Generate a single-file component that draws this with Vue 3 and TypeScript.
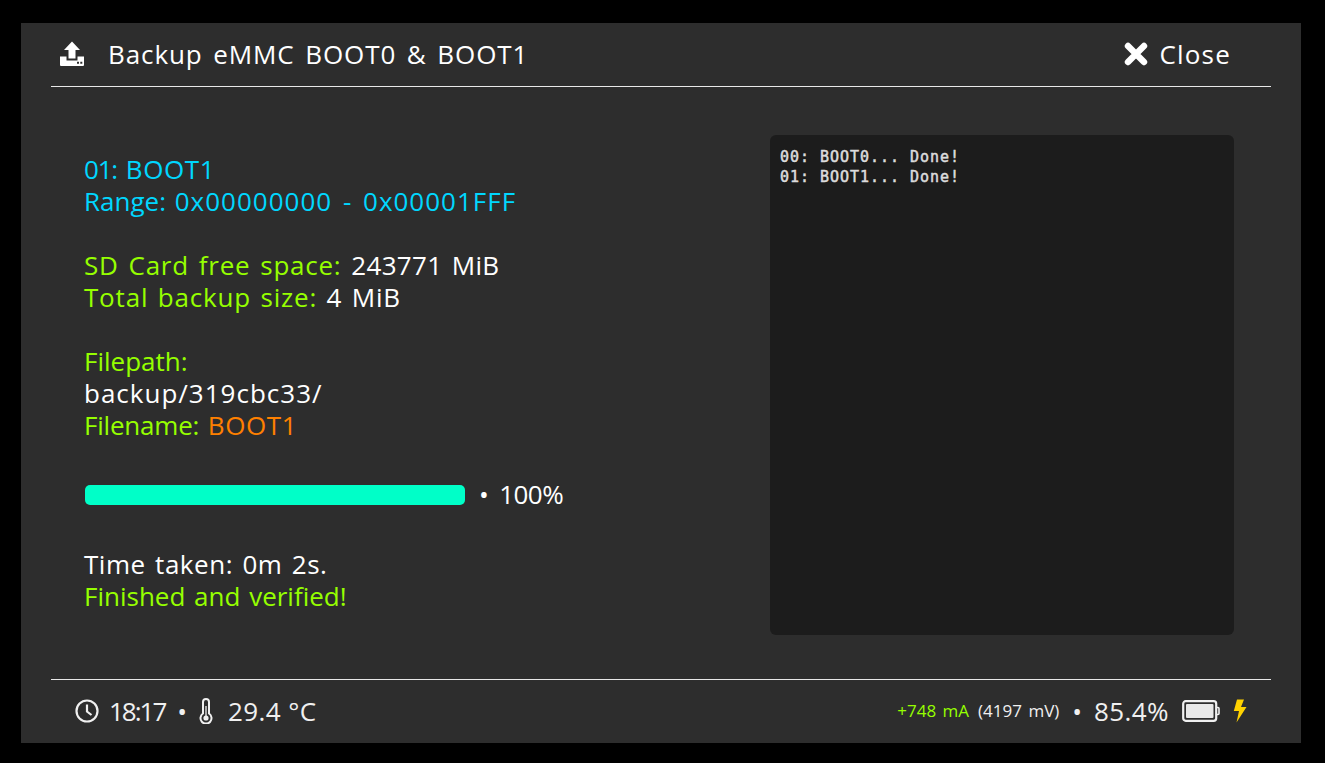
<script setup lang="ts">
const consoleLines: string[] = ['00: BOOT0... Done!', '01: BOOT1... Done!']
</script>

<template>
  <div class="frame">
    <main class="panel">
      <header class="top">
        <div class="title">
          <svg class="up" width="26" height="26" viewBox="0 0 26 26">
            <path fill="#fff" d="M13 0.5 L21 9 H16.5 V17.5 H9.5 V9 H5 Z" />
            <path fill="#fff" fill-rule="evenodd" d="M1 15.5 H7.5 V19.5 H18.5 V15.5 H25 V24 Q25 25 24 25 H2 Q1 25 1 24 Z M18 20.8 H20 V22.8 H18 Z M21.3 20.8 H23.3 V22.8 H21.3 Z" />
          </svg>
          <span>Backup eMMC BOOT0 &amp; BOOT1</span>
        </div>
        <div class="close">
          <svg width="24" height="24" viewBox="0 0 24 24">
            <path d="M4 4 L20 20 M20 4 L4 20" stroke="#fff" stroke-width="6.4" stroke-linecap="round" />
          </svg>
          <span>Close</span>
        </div>
      </header>

      <section class="body">
        <div class="info">
          <p class="cyan"><span class="tight">01:</span> <span class="caps">BOOT1</span></p>
          <p class="cyan">Range: <span class="hex">0x00000000 - 0x00001FFF</span></p>
          <p class="blank"></p>
          <p class="green s2">SD Card free space: <span class="white value">243771 MiB</span></p>
          <p class="green s3">Total backup size: <span class="white">4 MiB</span></p>
          <p class="blank"></p>
          <p class="green">Filepath:</p>
          <p class="white s4">backup/319cbc33/</p>
          <p class="green s5">Filename: <span class="orange caps">BOOT1</span></p>
          <div class="progress">
            <div class="track"><div class="fill" :style="{ width: '100%' }"></div></div>
            <span class="white pct">• 100%</span>
          </div>
          <p class="white s6">Time taken: 0m 2s.</p>
          <p class="green">Finished and verified!</p>
        </div>
        <div class="console">
          <div v-for="line in consoleLines" :key="line">{{ line }}</div>
        </div>
      </section>

      <footer class="bottom">
        <div class="left">
          <svg class="clock" width="26" height="26" viewBox="0 0 26 26" fill="none" stroke="#f0f0f0">
            <circle cx="13" cy="13" r="10.5" stroke-width="2.2" />
            <path d="M13 6.5 V13.5 L17.5 17" stroke-width="2.2" />
          </svg>
          <span class="time">18:17</span>
          <span class="dot">•</span>
          <svg width="14" height="26" viewBox="0 0 14 26" fill="none">
            <path stroke="#f0f0f0" stroke-width="2" d="M4 4 a3 3 0 0 1 6 0 V15.5 a5.5 5.5 0 1 1 -6 0 Z" />
            <path stroke="#aaa" stroke-width="2" d="M7 8 V18" />
            <circle cx="7" cy="20" r="2.6" fill="#f0f0f0" />
          </svg>
          <span class="temp">29.4 °C</span>
        </div>
        <div class="right">
          <span class="amp">+748 mA</span>
          <span class="volt">(4197 mV)</span>
          <span class="dot">•</span>
          <span class="batt">85.4%</span>
          <svg width="38" height="22" viewBox="0 0 38 22" fill="none">
            <rect x="1.2" y="1.2" width="33" height="19.6" rx="2.5" stroke="#f0f0f0" stroke-width="2.2" />
            <rect x="4" y="4" width="27.5" height="14" rx="1" fill="#e8e8e8" />
            <path d="M35 7.5 H36 Q37 7.5 37 8.5 V13.5 Q37 14.5 36 14.5 H35" stroke="#f0f0f0" stroke-width="1.6" />
          </svg>
          <svg class="bolt" width="14" height="24" viewBox="0 0 14 24">
            <path fill="#ffd200" d="M4 0.5 H11 L8 8 H13.5 L3.5 23.5 L6 12 H0.8 Z" />
          </svg>
        </div>
      </footer>
    </main>
  </div>
</template>

<style>
html, body { margin: 0; background: #000; }
</style>

<style scoped>
.frame {
  width: 1325px;
  height: 763px;
  box-sizing: border-box;
  padding: 23px 24px 20px 21px;
  background: #000;
  font-family: "Open Sans", "Noto Sans", sans-serif;
  color: #fff;
}
.panel {
  height: 720px;
  background: #2d2d2d;
  padding: 0 30px;
  display: flex;
  flex-direction: column;
}
.top {
  box-sizing: border-box;
  height: 64px;
  border-bottom: 1px solid #e8e8e8;
  display: flex;
  justify-content: space-between;
  align-items: center;
  padding: 0 40px 2px 8px;
  flex: none;
  font-size: 26px;
  font-weight: 400;
  letter-spacing: 0.9px;
  word-spacing: 3px;
}
.title, .close { display: flex; align-items: center; }
.title svg { margin-right: 23px; }
.close svg { margin-right: 11px; }
.close { letter-spacing: 1.2px; }
.body {
  flex: 1;
  display: flex;
  justify-content: space-between;
  padding: 48px 37px 44px 33px;
}
.info {
  padding-top: 18px;
  font-size: 26px;
  font-weight: 400;
  line-height: 32px;
  word-spacing: 2px;
}
p { margin: 0; height: 32px; white-space: nowrap; }
.tight { letter-spacing: -1.2px; }
.caps { letter-spacing: 0.6px; }
.hex { letter-spacing: 1px; word-spacing: 3px; }
.s2 { letter-spacing: 0.75px; word-spacing: 2.4px; }
.value { letter-spacing: 0.3px; }
.s3 { letter-spacing: 0.8px; }
.s4 { letter-spacing: 1px; }
.s5 { letter-spacing: -0.2px; }
.s6 { letter-spacing: 0.55px; }
.cyan { color: #00d7ff; }
.green { color: #96ff00; }
.white { color: #fff; }
.orange { color: #ff8000; }
.progress {
  display: flex;
  align-items: center;
  margin: 37px 0 38px;
  height: 32px;
}
.track { width: 380px; height: 20px; margin: 2px 0 0 1px; }
.fill { height: 100%; background: #00ffc8; border-radius: 5px; }
.pct { margin-left: 14px; word-spacing: 5px; letter-spacing: -0.6px; }
.console {
  box-sizing: border-box;
  width: 464px;
  height: 500px;
  padding: 12px 10px 0;
  background: #1c1c1c;
  border-radius: 6px;
  font-family: "DejaVu Sans Mono", monospace;
  font-size: 15px;
  font-weight: 400;
  -webkit-text-stroke: 0.5px #dcdcdc;
  letter-spacing: 0.97px;
  line-height: 20px;
  color: #dcdcdc;
  white-space: pre;
}
.bottom {
  box-sizing: border-box;
  height: 64px;
  flex: none;
  border-top: 1px solid #e8e8e8;
  display: flex;
  justify-content: space-between;
  align-items: center;
  padding: 0 24px 2px 23px;
  color: #f0f0f0;
}
.left, .right { display: flex; align-items: center; }
.left { font-size: 26px; font-weight: 400; }
.time { margin-left: 9px; letter-spacing: -2px; }
.dot { margin: 0 12px; font-size: 26px; font-weight: 400; line-height: 1; }
.temp { margin-left: 15px; letter-spacing: 0.4px; }
.right { font-weight: 400; }
.amp { color: #96ff00; font-size: 17px; word-spacing: 2px; }
.volt { font-size: 17px; margin-left: 9px; word-spacing: 2px; }
.right .dot { margin: 0 12px 0 13px; }
.batt { font-size: 26px; letter-spacing: 0.4px; margin-right: 13px; }
.bolt { margin-left: 13px; }
</style>
